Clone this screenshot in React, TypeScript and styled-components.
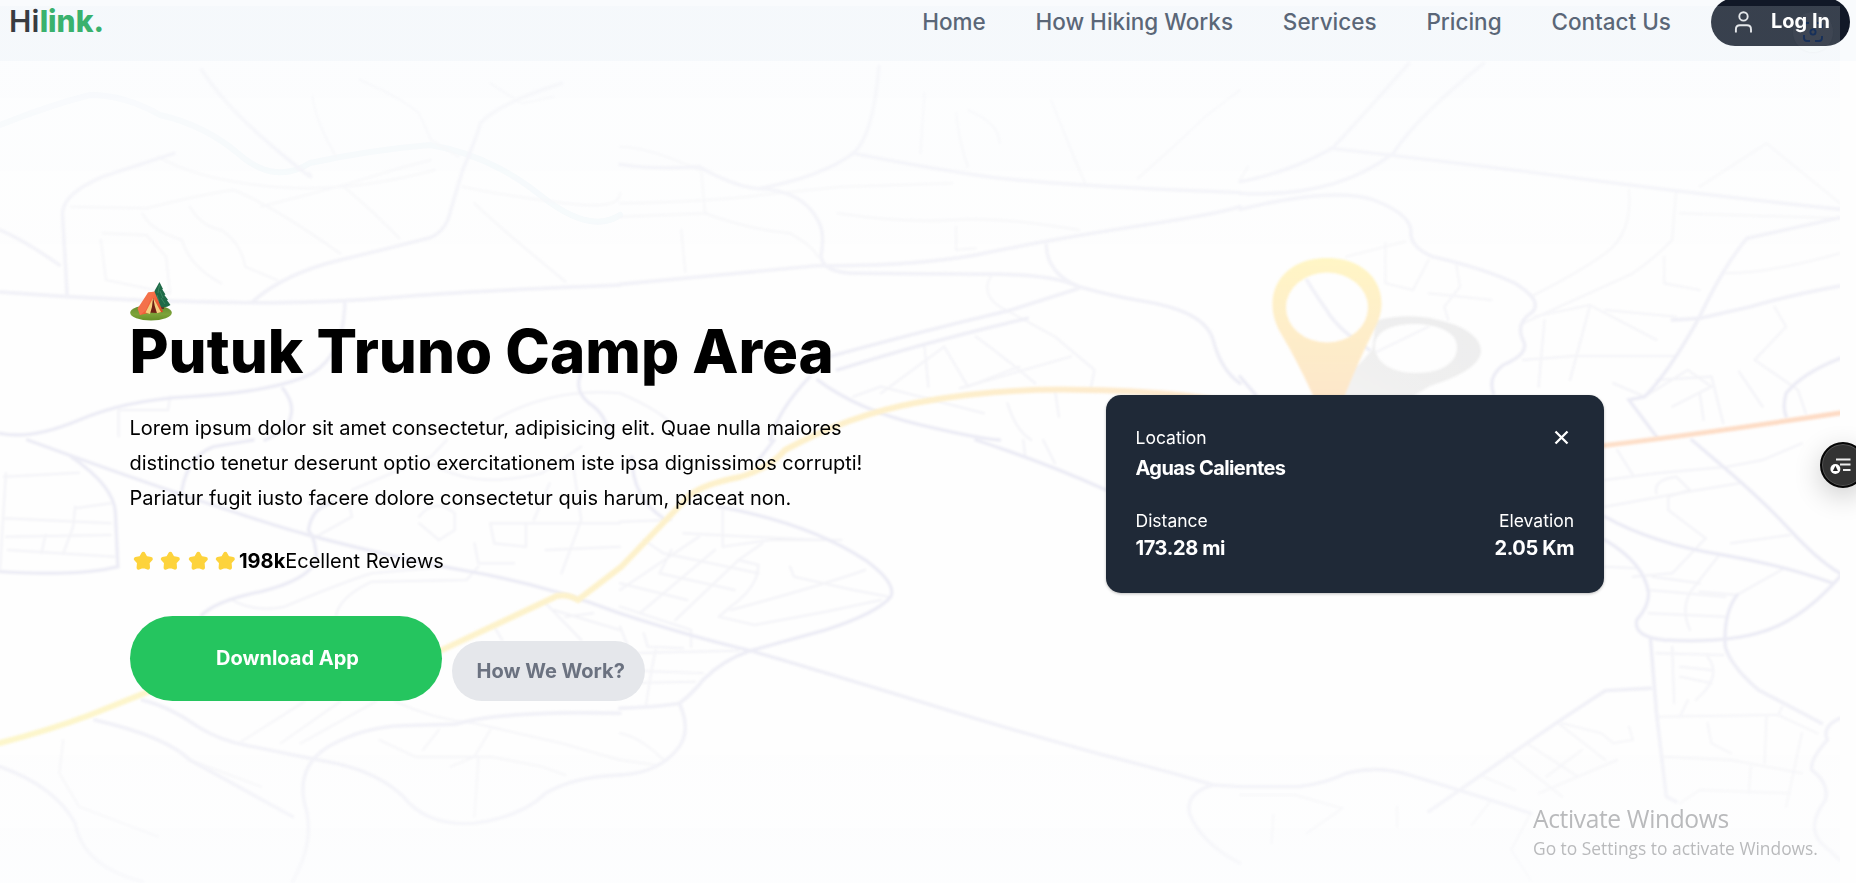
import React from 'react';
import styled, { createGlobalStyle } from 'styled-components';

const GlobalStyle = createGlobalStyle`
  *, *::before, *::after { box-sizing: border-box; }
  body {
    margin: 0;
    background: #fefefe;
    color: #000;
    font-family: Inter, "Liberation Sans", sans-serif;
    font-size: 20px;
  }
`;

const Page = styled.div`
  position: relative;
  height: 883px;
  overflow: hidden;
`;

const Header = styled.header`
  display: flex;
  align-items: flex-start;
  height: 61px;
  background: #f9fbfd;
`;

const Bar = styled.div`
  display: flex;
  flex: 1;
  align-items: center;
  height: 48px;
  margin-top: -2px;
  padding: 0 6px 0 8px;
`;

const Logo = styled.a`
  margin: 0 auto 2px 1px;
  color: #101215;
  font-size: 30px;
  font-weight: 600;
  letter-spacing: 0.2px;
  line-height: 1;
`;

const LogoAccent = styled.span`
  color: #12a34e;
  font-weight: 800;
  letter-spacing: 0;
`;

const Nav = styled.nav`
  display: flex;
  gap: 49.8px;
  margin: 0 40px 2px 0;
`;

const NavLink = styled.a`
  color: #3b475a;
  font-size: 22.5px;
  font-weight: 500;
  white-space: nowrap;
`;

const LoginButton = styled.button`
  display: flex;
  align-items: center;
  gap: 17px;
  width: 139px;
  height: 48px;
  padding: 0 0 1px 23px;
  border: 0;
  border-radius: 24px;
  background: #111827;
  color: #fff;
  font: 700 20px Inter, sans-serif;
  letter-spacing: 0;
`;

const LoginLabel = styled.span`
  position: relative;
  z-index: 3;
  margin-bottom: 1px;
  white-space: nowrap;
`;

const Main = styled.main`
  position: relative;
  z-index: 3;
  display: flex;
  align-items: flex-start;
  padding-left: 129.5px;
`;

const Intro = styled.section`
  width: 976.5px;
  padding-top: 220px;
`;

const Tent = styled.svg`
  display: block;
  width: 43px;
  height: 40px;
`;

const Title = styled.h1`
  margin: 0;
  font-size: 60px;
  font-weight: 800;
  line-height: 60px;
`;

const Description = styled.p`
  width: 745px;
  margin: 30px 0 0;
  line-height: 35px;
`;

const Reviews = styled.div`
  display: flex;
  align-items: center;
  margin-top: 28px;
  line-height: 35px;
`;

const StarIcon = styled.svg`
  width: 27.5px;
  height: 27.5px;
  margin-top: -2px;
`;

const Count = styled.b`
  margin-left: -0.5px;
  font-weight: 700;
`;

const Actions = styled.div`
  display: flex;
  align-items: flex-end;
  gap: 10px;
  margin-top: 37px;
`;

const PillButton = styled.button<{ $primary?: boolean }>`
  width: ${(p) => (p.$primary ? '312px' : '193px')};
  height: ${(p) => (p.$primary ? '85px' : '60px')};
  padding: ${(p) => (p.$primary ? '0 0 2px 4px' : '0 0 0 25px')};
  border: 0;
  border-radius: 43px;
  background: ${(p) => (p.$primary ? '#25c55f' : '#e5e7eb')};
  color: ${(p) => (p.$primary ? '#fff' : '#6b7280')};
  font: 700 20px Inter, sans-serif;
  text-align: ${(p) => (p.$primary ? 'center' : 'left')};
`;

const LocationCard = styled.aside`
  display: flex;
  flex-direction: column;
  gap: 23px;
  width: 498px;
  height: 198px;
  margin-top: 334px;
  padding: 28.5px 30px 28.5px 29.5px;
  border-radius: 15px;
  background: #1f2937;
  box-shadow: 0 1px 3px rgba(0, 0, 0, 0.25);
  color: #fff;
`;

const CardRow = styled.div`
  display: flex;
  justify-content: space-between;
`;

const Fact = styled.div<{ $end?: boolean }>`
  display: flex;
  flex-direction: column;
  align-items: ${(p) => (p.$end ? 'flex-end' : 'flex-start')};
`;

const FactLabel = styled.span`
  font-size: 17.5px;
  line-height: 28px;
`;

const FactValue = styled.strong<{ $tall?: boolean }>`
  font-weight: 700;
  letter-spacing: ${(p) => (p.$tall ? '-0.6px' : '-0.4px')};
  line-height: ${(p) => (p.$tall ? '32px' : '27px')};
`;

const CloseIcon = styled.svg`
  width: 15px;
  height: 15px;
  margin: 6px 5px 0 0;
`;

const MapLayer = styled.div`
  position: absolute;
  z-index: 2;
  top: 6px;
  left: 0;
  width: 1840px;
  height: 877px;
  pointer-events: none;
  background:
    linear-gradient(rgba(230, 242, 248, 0.19), rgba(230, 242, 248, 0.19)) 0 0 / 100% 55px no-repeat,
    linear-gradient(rgba(244, 249, 255, 0.2), rgba(255, 255, 255, 0.19) 25%, rgba(255, 255, 255, 0.19) 75%, rgba(244, 248, 255, 0.2)) 0 55px no-repeat;
`;

const MapDrawing = styled.svg`
  position: absolute;
  z-index: 1;
  left: 0;
  top: 0;
  width: 1840px;
  height: 883px;

  path { fill: none; vector-effect: non-scaling-stroke; stroke-linecap: round; }
`;

const LensBadge = styled.div`
  position: absolute;
  z-index: 2;
  top: 12px;
  left: 1793px;
  display: grid;
  place-items: center;
  width: 40px;
  height: 40px;
  border-radius: 50%;
  background: rgba(255, 255, 255, 0.03);
  box-shadow: 0 1px 2px rgba(0, 0, 0, 0.025);
`;

const FloatingTool = styled.button`
  position: absolute;
  z-index: 4;
  top: 442px;
  left: 1820px;
  width: 46px;
  height: 46px;
  padding: 0;
  border: 2px solid #060606;
  border-radius: 50%;
  background: #333;
  box-shadow: inset 0 0 0 1px #555, 0 8px 28px rgba(0, 0, 0, 0.2);
`;

const Watermark = styled.div`
  position: absolute;
  z-index: 4;
  left: 1533px;
  top: 802px;
  color: #b9babc;
  font-family: "Open Sans", "Noto Sans", sans-serif;
  white-space: nowrap;
`;

const WatermarkTitle = styled.div`
  font-size: 24.6px;
  letter-spacing: -0.38px;
  line-height: 34px;
`;

const WatermarkText = styled.div`
  font-size: 17.4px;
  line-height: 25px;
`;

const LINKS = ['Home', 'How Hiking Works', 'Services', 'Pricing', 'Contact Us'];

type Road = { at: string; main: string[]; minor: string[] };

const ROADS: Road[] = [
  {
    at: 'translate(0 0) scale(.3954 .3333)',
    main: [
      'M0 876Q150 890 300 898T640 908T1000 892T1568 855',
      'M640 904Q720 820 860 780T1090 712Q1130 690 1140 630L1170 510Q1200 430 1215 370Q1260 310 1420 250',
      'M170 890L158 640Q160 580 260 530L440 460',
      'M0 690Q60 720 150 795',
      'M872 910Q870 1060 790 1120Q700 1175 480 1190Q320 1200 200 1260T0 1300',
      'M715 1165Q745 1210 735 1250Q730 1290 670 1320',
      'M1470 1120Q1450 1170 1490 1210Q1530 1240 1540 1300',
      'M510 210Q570 320 690 440T780 520',
    ],
    minor: [
      'M180 620L370 625Q520 580 590 570Q680 610 860 760', 'M360 640Q380 690 460 720Q480 800 560 850', 'M480 620Q510 680 560 690Q610 730 620 800L700 840',
      'M255 720L268 840L430 880L420 770L370 705L260 700', 'M660 620Q860 560 940 530T1090 480', 'M870 560Q950 640 1010 715', 'M910 240Q1010 290 1060 340L1090 420L1160 470',
      'M790 290Q800 370 850 470', 'M430 1190L425 1230L300 1230L300 1310', 'M1200 610Q1260 680 1430 845', 'M1240 250L1320 310L1400 290', 'M1170 560Q1290 590 1430 610T1568 580', 'M400 470Q500 540 690 560T1100 510', 'M1250 1260Q1400 1160 1568 1180',
    ],
  },
  {
    at: 'translate(620 0) scale(.3954 .3333)',
    main: [
      'M0 853Q260 825 500 797', 'M0 493Q90 510 200 500Q290 560 350 566Q460 570 500 660Q520 700 508 770Q515 820 600 820L960 823',
      'M500 797Q730 800 900 765Q1080 720 1300 680T1568 620', 'M350 566Q510 530 590 460Q640 410 655 200',
      'M1078 735Q1080 820 1160 860Q1250 890 1330 905Q1480 935 1500 1020Q1520 1110 1568 1150', 'M960 823Q1100 825 1160 860',
      'M500 1080Q740 1000 990 930L1160 865', 'M550 1110Q760 1030 1030 955', 'M480 1130Q400 1230 380 1320',
      'M590 460Q760 500 900 525Q1060 555 1568 578', 'M500 1140Q600 1230 760 1275T960 1320',
    ],
    minor: [
      'M205 500L215 640Q330 690 430 700Q490 740 500 770', 'M0 610Q200 605 320 590T560 560L840 550', 'M0 650L220 640', 'M0 440Q70 440 200 510', 'M155 690L165 815', 'M940 825Q910 880 960 920L1100 1010L1200 1110L1190 1170',
      'M770 1040L780 1160M660 1180L820 1040L880 1160L1010 1100M590 1190L660 1160L920 1240', 'M850 340Q860 440 880 500M770 280L760 460M880 330Q960 370 960 430', 'M1090 300Q1150 480 1180 560M1310 535Q1420 420 1480 350L1568 270', 'M550 640Q720 670 840 660T1160 690', 'M850 680L850 750L900 745', 'M0 1180Q80 1220 120 1260', 'M860 1165L1140 1070M900 1010Q970 1070 1050 1150M1100 1170L1110 1250M980 1210Q1000 1290 1040 1320',
    ],
  },
  {
    at: 'translate(1240 0) scale(.3929 .3333)',
    main: [
      'M0 628Q240 560 340 600Q430 640 435 690Q430 740 490 770Q620 805 700 850Q770 900 745 935Q700 970 720 1020Q740 1060 670 1095Q630 1130 645 1180',
      'M230 445Q500 480 860 535T1527 628', 'M1527 653L1290 715Q1230 800 1170 950Q1090 1120 1030 1190L990 1200L1060 1310',
      'M1527 858Q1400 885 1300 920L1170 955L1100 960', 'M1527 1075Q1430 1120 1390 1180Q1380 1220 1390 1250', 'M0 545Q120 520 235 445Q310 350 430 190', 'M0 580Q240 595 390 460Q450 350 620 190', 'M0 1130L40 1185',
      'M170 840Q190 880 220 930Q250 990 330 1050',
    ],
    minor: [
      'M990 570Q1000 700 930 760T740 890', 'M1110 570L1100 720Q1060 770 1000 820L720 970', 'M1170 560L1340 430L1527 610', 'M270 770L420 725M370 730L370 850L440 870L480 780M550 790L560 860L520 920L530 960M480 880L640 900', 'M890 920L840 1140M760 1160L775 960M750 950L890 915L1060 1020M720 1080L850 1068L1105 1068M930 930L1110 950',
      'M1360 920L1390 980L1310 1080L1420 1170L1440 1240M1060 1140L1200 1130L1230 1270M1270 1115L1330 1220M1170 1180L1180 1260', 'M1230 820Q1350 820 1527 760M1080 770L1080 850L1170 870', 'M950 1150L1030 1190L1140 1110L1200 1160L1100 1220', 'M0 540L20 500M340 1060L480 980', 'M1120 640L1527 655',
    ],
  },
  {
    at: 'translate(0 440) scale(.3954 .3333)',
    main: [
      'M70 0Q300 100 500 180T780 285Q1000 355 1190 395T1568 520', 'M180 50Q290 140 292 220L298 380Q200 410 0 395', 'M460 150Q475 50 540 20L640 0',
      'M510 525Q550 480 660 455Q780 420 800 360Q800 300 780 270Q790 200 840 190', 'M360 780Q430 800 500 860Q560 905 640 920Q760 950 850 970Q960 1000 1020 1070Q1080 1160 1200 1150Q1320 1130 1380 1060Q1450 1010 1568 1005',
      'M0 980Q140 1040 190 1150Q210 1280 360 1325', 'M740 1325Q800 1200 770 1090Q750 980 830 920Q920 860 1020 857L1150 853Q1280 810 1568 820', 'M240 840Q420 890 480 960L740 1130',
    ],
    minor: [
      'M15 100L5 290L0 390M10 110L200 98M190 200L185 260L160 340M190 205L280 190M10 235L280 250M15 290L280 285M20 330L290 350M115 285L105 340', 'M780 190L880 175L890 230L800 290M890 150L1090 50L1130 0',
      'M1060 230Q1100 170 1150 220L1150 270L1110 300L1060 250M1090 70Q1200 150 1370 100L1470 20M1240 250L1568 250M1240 250L1250 310L1330 320L1330 250M1200 310L1210 370L1300 370M1350 240L1390 130M1450 80L1470 240L1420 400M1380 330L1568 320',
      'M580 475Q640 520 720 500Q860 430 940 400L1130 380', 'M850 525Q860 470 940 425L1180 420L1210 380', 'M610 905L770 785M710 910L860 785M760 910L950 785', 'M1000 785Q1100 840 1200 850L1420 910L1568 960M1110 870L1070 930M1240 870L1200 950L1140 980M960 900L1050 950L1240 950L1370 980L1430 1005M1210 950L1200 1130', 'M1250 560L1270 600M1380 490L1470 600M1400 510L1568 570M1430 530L1500 520', 'M160 900L150 1000L200 1100L400 1190M480 960L660 1040',
    ],
  },
  {
    at: 'translate(620 440) scale(.3954 .3333)',
    main: [
      'M250 200Q480 250 620 360Q700 430 685 470Q650 520 520 570L330 632Q260 660 210 720Q180 765 150 790Q100 800 0 805', 'M0 520Q180 590 330 632Q500 690 800 800T1400 1000L1500 1035L1568 1040',
      'M150 790Q180 870 150 920Q100 1000 0 1005', 'M1500 1035Q1430 1060 1440 1120Q1470 1210 1568 1270', 'M30 50Q30 170 110 235', 'M390 0L350 60', 'M900 0Q1080 70 1229 150',
    ],
    minor: [
      'M0 245L130 240M260 205L260 320L380 300L560 300M160 280L500 300', 'M60 300L110 340L350 400M200 290L0 450M130 330L100 400L290 450M240 330L50 520M300 360L140 540M350 375Q350 440 280 500L250 530M0 430L170 480', 'M360 310L300 360L350 375', 'M430 380L440 410L590 450L680 470M620 390Q500 440 280 510M0 500L180 570L180 620M60 580L70 620L160 625M90 630L80 690L65 800M0 560L20 620M0 640L300 632M0 690L210 700M0 730L190 725', 'M250 530L340 555L520 515L660 480', 'M0 880Q50 890 110 960M0 960L90 975', 'M1020 0L1025 50M1070 0L1100 70',
    ],
  },
  {
    at: 'translate(1240 440) scale(.3929 .3333)',
    main: [
      'M929 300Q1030 370 1040 460Q1040 500 1010 540Q1000 590 1080 600Q1240 610 1330 575Q1430 540 1527 410', 'M1150 0L1220 70Q1330 180 1400 270T1527 400', 'M1045 600L1060 820L1085 1070L1110 1085',
      'M1045 745L930 752Q880 790 810 845Q680 950 560 1050L480 1115', 'M0 1040L150 1040Q220 1030 270 1000Q350 975 430 1005Q600 1065 740 1120', 'M1527 835Q1480 860 1495 900Q1450 960 1455 990Q1500 1030 1490 1080Q1440 1160 1480 1210L1527 1260',
      'M929 230Q1050 310 1230 345Q1380 375 1510 430', 'M1265 465Q1230 520 1235 620Q1250 680 1320 750L1480 850',
    ],
    minor: [
      'M960 30L1000 105M929 120L1060 100L1240 80L1330 60L1430 10M929 200L1140 155L1270 130', 'M1060 160Q1050 120 1110 110L1145 150L1090 170L1090 210L1185 295L1100 400L1000 410M1050 410L1170 430M1250 310L1400 285M1220 345L1150 450Q1120 500 1145 570M1385 385L1265 465L1170 455M929 380L1010 385',
      'M1040 450L1235 470M1040 520L1235 530M1060 640L1230 645M1100 620L1105 790M1120 680L1200 690M1120 710L1200 730M1190 650Q1230 710 1160 780', 'M1060 830L1370 825L1470 880M1080 950L1250 960L1430 1000M1190 850L1200 910L1250 940M1340 830L1335 970M1430 880L1390 1100M990 860L1000 900L950 910L920 880L820 850M810 850L930 960M730 910L860 1010M680 940L820 1070M620 1010L700 1050M870 930L780 1010M960 960L760 1060', 'M1300 980L1295 1060M1120 1090L1170 1050L1400 1060', 'M0 1065L140 1065L260 1105L170 1180M85 1125L80 1210M400 1100L400 1160M640 1080L590 1155', 'M740 1120L690 1230L740 1320', 'M1140 780L1120 830M1380 800L1370 825',
    ],
  },
];

function MapBackdrop() {
  return (
    <MapDrawing viewBox="0 0 1840 883">
      <defs>
        <linearGradient id="fade" x1="0" y1="0" x2="0" y2="1">
          <stop offset=".06" stopColor="#fff" stopOpacity=".3" />
          <stop offset=".25" stopColor="#fff" stopOpacity=".65" />
          <stop offset=".4" stopColor="#fff" />
          <stop offset=".7" stopColor="#fff" />
          <stop offset="1" stopColor="#fff" stopOpacity=".2" />
        </linearGradient>
        <mask id="haze" maskUnits="userSpaceOnUse" x="0" y="0" width="1840" height="883">
          <rect y="61" width="1840" height="822" fill="url(#fade)" />
        </mask>
        <linearGradient id="pin" x1="0" y1="0" x2="0" y2="1">
          <stop offset="0" stopColor="#fff4b8" />
          <stop offset=".35" stopColor="#feecbc" />
          <stop offset="1" stopColor="#fde1bf" />
        </linearGradient>
        <linearGradient id="highway" gradientUnits="userSpaceOnUse" x1="0" y1="0" x2="1840" y2="0">
          <stop offset="0" stopColor="#fcf4c0" />
          <stop offset=".5" stopColor="#fdecc0" />
          <stop offset=".72" stopColor="#fde0c6" />
          <stop offset="1" stopColor="#fdd3b8" />
        </linearGradient>
        <linearGradient id="castShadow" x1="0" y1="1" x2="1" y2="0">
          <stop offset="0" stopColor="#f1f0ef" />
          <stop offset=".45" stopColor="#ebebeb" />
          <stop offset="1" stopColor="#e9e9ea" />
        </linearGradient>
        <filter id="soft" x="-10%" y="-10%" width="120%" height="120%">
          <feGaussianBlur stdDeviation="0.9" />
        </filter>
      </defs>
      <g mask="url(#haze)">
        <path d="M0 125Q50 105 90 95Q125 95 160 115Q205 125 240 155T310 163Q370 150 430 145Q490 155 540 195T620 215" stroke="#edf5fa" strokeWidth="6" />
        <g filter="url(#soft)">
          {ROADS.map((r) => (
            <g key={r.at} transform={r.at}>
              {r.minor.map((d) => <path key={d} d={d} stroke="#f0f0f5" strokeWidth="2" />)}
              {r.main.map((d) => <path key={d} d={d} stroke="#e8e8f3" strokeWidth="3.4" />)}
            </g>
          ))}
        </g>
      </g>
      <g filter="url(#soft)">
        <path d="M0 743Q50 730 90 715L150 692L442 650L557 596Q568 594 578 600" stroke="none" />
        <path d="M0 743Q50 730 90 715L150 691L300 680L442 650L557 596Q568 594 578 600L621 567L690 495Q704 484 740 477Q770 468 785 450Q850 415 915 403Q1000 387 1090 390Q1200 392 1250 408" stroke="url(#highway)" strokeWidth="6" />
        <path d="M1600 446Q1700 434 1840 413" stroke="url(#highway)" strokeWidth="5" />
        <path d="M1376 321C1394 315 1420 315 1438 320C1466 326 1481 338 1481 351C1480 367 1455 378 1430 386L1410 398H1327L1352 372L1372 350ZM1375 348C1376 362 1391 373 1416 373C1443 373 1457 362 1457 347C1457 332 1438 324 1412 324C1388 325 1374 333 1375 348Z" fillRule="evenodd" style={{ fill: 'url(#castShadow)' }} />
        <path d="M1315 400Q1298 362 1280 332C1260 295 1281 258 1327 258C1373 258 1394 295 1374 330Q1358 362 1343 400ZM1286 307.5A41 35 0 1 0 1368 307.5A41 35 0 1 0 1286 307.5Z" fillRule="evenodd" style={{ fill: 'url(#pin)' }} />
      </g>
    </MapDrawing>
  );
}

const Star = () => (
  <StarIcon viewBox="0 0 27.5 27.5">
    <path d="M13.3 6.8L15.7 10.9L20.8 12L17.6 15.5L18 20.7L13.3 18.9L8.6 20.7L9 15.5L5.8 12L10.9 10.9Z" fill="#fdd33c" stroke="#fdd33c" strokeWidth="4" strokeLinejoin="round" />
  </StarIcon>
);

export default function App() {
  return (
    <Page>
      <GlobalStyle />
      <Header>
        <Bar>
          <Logo>Hi<LogoAccent>link.</LogoAccent></Logo>
          <Nav>
            {LINKS.map((l) => <NavLink key={l}>{l}</NavLink>)}
          </Nav>
          <LoginButton>
            <svg width="20" height="24" viewBox="0 0 20 24" fill="none" stroke="#e4e5e8" strokeWidth="1.9">
              <circle cx="9.5" cy="6.4" r="4.2" />
              <path d="M1.9 22.4V19.4Q1.9 15.3 6 15.3H13Q17 15.3 17 19.4V22.4" />
            </svg>
            <LoginLabel>Log In</LoginLabel>
          </LoginButton>
        </Bar>
      </Header>

      <MapBackdrop />
      <MapLayer />
      <LensBadge>
        <svg width="22" height="22" viewBox="0 0 22 22" fill="none" stroke="#17305a" strokeWidth="1.8">
          <path d="M2 7V5Q2 2 5 2H7M15 2H17Q20 2 20 5V7M20 15V17Q20 20 17 20H13M8 20H5Q2 20 2 17V14" />
          <circle cx="11" cy="11" r="2.6" />
        </svg>
      </LensBadge>

      <Main>
        <Intro>
          <Tent viewBox="0 0 43 40">
            <defs>
              <linearGradient id="grass" x1="0" y1="0" x2="0" y2="1">
                <stop offset="0" stopColor="#5f8a2c" />
                <stop offset=".6" stopColor="#7da33a" />
                <stop offset="1" stopColor="#658f26" />
              </linearGradient>
              <linearGradient id="canvas" x1="0" y1="0" x2="1" y2="1">
                <stop offset="0" stopColor="#f98a5f" />
                <stop offset=".5" stopColor="#f2633c" />
                <stop offset="1" stopColor="#d8401f" />
              </linearGradient>
            </defs>
            <ellipse cx="21" cy="31.8" rx="20.8" ry="7.8" fill="url(#grass)" />
            <path d="M31 22H34V28H31Z" fill="#5b3a24" />
            <path d="M29.5 1L33 8L32.2 8.3L35.5 13.5L34.4 14L38 18.8L37 19.3L40.5 24Q35 28 27 25L23 14L25 9Z" fill="#1f6a48" />
            <path d="M29.5 4L28 12M30 10L33 17M31 17L35 23M27 14L29 21" stroke="#39875f" strokeWidth="1" fill="none" />
            <path d="M18.5 11.5L24.5 10.5L33 31L27.5 31.5L22.5 20L19 32L10 34L14.5 25Z" fill="url(#canvas)" />
            <path d="M18 11.5L23 11L16 29L10 34.3L7.5 27.5Q12 21 18 11.5Z" fill="#f4714a" />
            <path d="M23.3 17L17.5 31.5L28 32Z" fill="#6f2115" />
            <path d="M23 17L15.5 31.5L20 33Q22.5 26 23 17ZM23.3 17L31 31L27 32.2Q24.5 26 23.3 17Z" fill="#f4cf80" />
          </Tent>
          <Title>Putuk Truno Camp Area</Title>
          <Description>
            Lorem ipsum dolor sit amet consectetur, adipisicing elit. Quae nulla maiores distinctio tenetur
            deserunt optio exercitationem iste ipsa dignissimos corrupti! Pariatur fugit iusto facere dolore
            consectetur quis harum, placeat non.
          </Description>
          <Reviews>
            <Star /><Star /><Star /><Star />
            <Count>198k</Count>
            <span>Ecellent Reviews</span>
          </Reviews>
          <Actions>
            <PillButton $primary>Download App</PillButton>
            <PillButton>How We Work?</PillButton>
          </Actions>
        </Intro>

        <LocationCard>
          <CardRow>
            <Fact>
              <FactLabel>Location</FactLabel>
              <FactValue $tall>Aguas Calientes</FactValue>
            </Fact>
            <CloseIcon viewBox="0 0 15 15" stroke="#fff" strokeWidth="2.3">
              <path d="M1.5 1.5L13.5 13.5M13.5 1.5L1.5 13.5" />
            </CloseIcon>
          </CardRow>
          <CardRow>
            <Fact>
              <FactLabel>Distance</FactLabel>
              <FactValue>173.28 mi</FactValue>
            </Fact>
            <Fact $end>
              <FactLabel>Elevation</FactLabel>
              <FactValue>2.05 Km</FactValue>
            </Fact>
          </CardRow>
        </LocationCard>
      </Main>

      <FloatingTool>
        <svg width="42" height="42" viewBox="0 0 42 42">
          <path d="M14 15.5H28.5M18 20.5H28.5M21 26H28.5" stroke="#eee" strokeWidth="2" />
          <circle cx="13.4" cy="25" r="5" fill="#fff" />
          <path d="M13.4 21.8L15.9 27H10.9Z" fill="#222" />
        </svg>
      </FloatingTool>
      <Watermark>
        <WatermarkTitle>Activate Windows</WatermarkTitle>
        <WatermarkText>Go to Settings to activate Windows.</WatermarkText>
      </Watermark>
    </Page>
  );
}
